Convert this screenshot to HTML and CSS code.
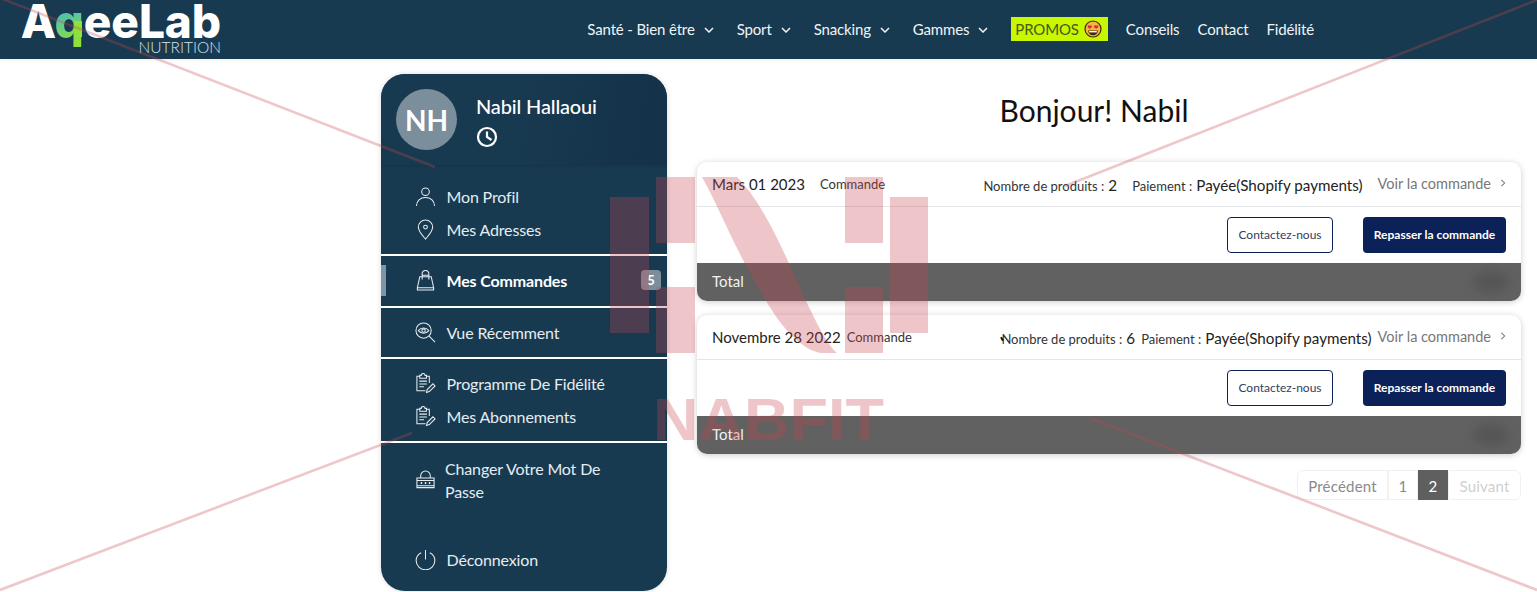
FILE: index.html
```html
<!DOCTYPE html>
<html lang="fr">
<head>
  <meta charset="UTF-8" />
  <title>Mes Commandes</title>
  <meta name="viewport" content="width=device-width, initial-scale=1.0"/>
  <link rel="stylesheet" href="styles.css">
</head>
<body>

  <!-- Top navigation -->
  <header class="navbar">
    <a class="logo" href="#">
      <span class="logo-word">A<span class="logo-q">q</span>eeLab</span>
      <span class="logo-sub">NUTRITION</span>
    </a>
    <nav class="nav-links">
      <a href="#">Santé - Bien être<svg class="chev" viewBox="0 0 10 6"><path d="M1 1l4 4 4-4"/></svg></a>
      <a href="#">Sport<svg class="chev" viewBox="0 0 10 6"><path d="M1 1l4 4 4-4"/></svg></a>
      <a href="#">Snacking<svg class="chev" viewBox="0 0 10 6"><path d="M1 1l4 4 4-4"/></svg></a>
      <a href="#">Gammes<svg class="chev" viewBox="0 0 10 6"><path d="M1 1l4 4 4-4"/></svg></a>
      <a class="promo" href="#">PROMOS<svg class="emoji" viewBox="0 0 18 18">
          <circle cx="9" cy="9" r="8" fill="#f5b642" stroke="#3b2a10" stroke-width="1.2"/>
          <path d="M3.6 6.2c.6-1.4 2-1 2.2-.3.3-.7 1.7-1 2.1.3.2 1-1.3 2-2.1 2.6-.9-.6-2.5-1.5-2.2-2.6zM10 6.2c.5-1.3 1.9-1 2.1-.3.3-.7 1.7-1 2.2.3.3 1.1-1.3 2-2.2 2.6-.8-.6-2.4-1.6-2.1-2.6z" fill="#e3243b"/>
          <path d="M4.2 10.4h9.6c0 3-2.1 4.8-4.8 4.8s-4.8-1.8-4.8-4.8z" fill="#3b2a10"/>
          <path d="M5.2 11h7.6v1.4H5.2z" fill="#fff"/>
        </svg></a>
      <a href="#">Conseils</a>
      <a href="#">Contact</a>
      <a href="#">Fidélité</a>
    </nav>
  </header>

  <main class="page">

    <!-- Account sidebar -->
    <aside class="sidebar">
      <div class="profile">
        <div class="avatar">NH</div>
        <div>
          <div class="profile-name">Nabil Hallaoui</div>
          <svg class="clock" viewBox="0 0 22 22"><circle cx="11" cy="11" r="9"/><path d="M11 5.5V11l4.5 3"/></svg>
        </div>
      </div>

      <div class="menu-group">
        <a class="menu-item" href="#">
          <svg class="icon" viewBox="0 0 22 22"><circle cx="11" cy="6" r="4"/><path d="M1.5 21c0-5.5 4-9 9.5-9s9.5 3.500 9.500 9"/></svg>
          Mon Profil
        </a>
        <a class="menu-item" href="#">
          <svg class="icon" viewBox="0 0 22 22"><path d="M11 21C7 16.500 3.500 13 3.500 8.500a7.500 7.500 0 0 1 15 0C18.500 13 15 16.500 11 21z"/><circle cx="11" cy="8.500" r="2"/></svg>
          Mes Adresses
        </a>
      </div>

      <div class="menu-group menu-group-single">
        <span class="active-bar"></span>
        <a class="menu-item menu-item-active" href="#">
          <svg class="icon" viewBox="0 0 22 22"><path d="M5 7h12l2.500 11.500h-17zM2.500 18.500v2.500h17v-2.500"/><path d="M7.500 10V4a3.500 3.500 0 0 1 7 0v6M7.500 5.500h7"/></svg>
          Mes Commandes
        </a>
        <span class="badge">5</span>
      </div>

      <div class="menu-group menu-group-single">
        <a class="menu-item" href="#">
          <svg class="icon" viewBox="0 0 22 22"><circle cx="9" cy="9" r="8"/><path d="M14.800 14.800L21 21M3.500 9c2.800-3.600 8.200-3.600 11 0-2.800 3.600-8.200 3.600-11 0z"/><circle cx="9" cy="9" r="1.800"/></svg>
          Vue Récemment
        </a>
      </div>

      <div class="menu-group">
        <a class="menu-item" href="#">
          <svg class="icon" viewBox="0 0 22 22"><path d="M11 18.500H2V3.500h3M12 3.500h3v7M5 2.500h1.500a2 2 0 0 1 4 0H12v3H5zM4.500 8.500h8M4.500 11.500h8M4.500 14.500h5"/><path d="M12 20.500l.8-3.200 6-6 2.200 2.200-6 6z"/></svg>
          Programme De Fidélité
        </a>
        <a class="menu-item" href="#">
          <svg class="icon" viewBox="0 0 22 22"><path d="M11 18.500H2V3.500h3M12 3.500h3v7M5 2.500h1.500a2 2 0 0 1 4 0H12v3H5zM4.500 8.500h8M4.500 11.500h8M4.500 14.500h5"/><path d="M12 20.500l.8-3.200 6-6 2.200 2.200-6 6z"/></svg>
          Mes Abonnements
        </a>
      </div>

      <div class="menu-group menu-group-last">
        <a class="menu-item menu-item-wrap" href="#">
          <svg class="icon" viewBox="0 0 22 22"><path d="M6 9.500V7a5 5 0 0 1 10 0v2.500M2 9.500h18v10H2zM2 12h18M2 17.500h18"/><path class="dots" d="M6 14.700h1.500M10.300 14.700h1.500M14.500 14.700H16"/></svg>
          <span>Changer Votre Mot De Passe</span>
        </a>
        <a class="menu-item menu-item-logout" href="#">
          <svg class="icon" viewBox="0 0 22 22"><path d="M11 1v10M6.500 4C3.400 5.600 1.200 8.600 1.200 12a9.800 9.800 0 0 0 19.600 0c0-3.400-2.200-6.400-5.300-8"/></svg>
          Déconnexion
        </a>
      </div>
    </aside>

    <!-- Orders -->
    <section class="content">
      <h1>Bonjour! Nabil</h1>

      <article class="order">
        <div class="order-head">
          <div class="order-date"><span class="date">Mars 01 2023</span><span class="small">Commande</span></div>
          <div class="order-meta">
            <span class="count"><span class="small">Nombre de produits :</span> <span class="val">2</span></span>
            <span class="pay"><span class="small">Paiement :</span> <span class="val">Payée(Shopify payments)</span></span>
            <a class="see" href="#">Voir la commande<svg class="chev-right" viewBox="0 0 6 10"><path d="M1 1l4 4-4 4"/></svg></a>
          </div>
        </div>
        <div class="order-actions">
          <a class="btn btn-outline" href="#">Contactez-nous</a>
          <a class="btn btn-dark" href="#">Repasser la commande</a>
        </div>
        <div class="order-total">Total</div>
      </article>

      <article class="order order-tight">
        <div class="order-head">
          <div class="order-date"><span class="date">Novembre 28 2022</span><span class="small">Commande</span></div>
          <div class="order-meta">
            <span class="count"><span class="tick"></span><span class="small">Nombre de produits :</span> <span class="val">6</span></span>
            <span class="pay"><span class="small">Paiement :</span> <span class="val">Payée(Shopify payments)</span></span>
            <a class="see" href="#">Voir la commande<svg class="chev-right" viewBox="0 0 6 10"><path d="M1 1l4 4-4 4"/></svg></a>
          </div>
        </div>
        <div class="order-actions">
          <a class="btn btn-outline" href="#">Contactez-nous</a>
          <a class="btn btn-dark" href="#">Repasser la commande</a>
        </div>
        <div class="order-total">Total</div>
      </article>

      <div class="pagination">
        <a class="page-prev" href="#">Précédent</a>
        <a class="page-num" href="#">1</a>
        <a class="page-num page-current" href="#">2</a>
        <a class="page-next" href="#">Suivant</a>
      </div>
    </section>
  </main>

  <!-- Watermark laid over the whole page -->
  <svg class="watermark" viewBox="0 0 1537 592" width="1537" height="592">
    <g class="wm-lines">
      <path d="M0 -2L435 167"/>
      <path d="M0 590L412 433"/>
      <path d="M1537 0L1065 186"/>
      <path d="M1090 418L1537 590"/>
    </g>
    <g class="wm-mark">
      <rect x="610" y="197" width="39" height="136"/>
      <rect x="656" y="177" width="39" height="66"/>
      <rect x="656" y="287" width="39" height="66"/>
      <rect x="845" y="177" width="38" height="66"/>
      <rect x="845" y="287" width="38" height="66"/>
      <rect x="890" y="197" width="38" height="136"/>
      <path d="M702 177L737 177C765 205 785 255 807 303C820 330 828 345 837 353L820 353C790 345 770 310 743 260C725 225 715 200 702 177Z"/>
      <text x="653" y="440" textLength="231" lengthAdjust="spacingAndGlyphs">NABFIT</text>
    </g>
  </svg>

</body>
</html>
```

FILE: styles.css
```css
body, html {
  margin: 0;
  padding: 0;
  font-family: Lato, Arial, sans-serif;
  background: white;
  color: #222;
  overflow: hidden;
}

body {
  position: relative;
  height: 592px;
}

a {
  text-decoration: none;
  color: inherit;
}

/* Navbar */
.navbar {
  display: flex;
  justify-content: space-between;
  align-items: center;
  height: 59px;
  padding: 0 223px 0 20px;
  background-color: #183a50;
  box-shadow: 0 1px 3px rgba(0, 0, 0, 0.08);
}

.logo {
  display: flex;
  flex-direction: column;
  align-items: flex-end;
  width: 201px;
  height: 59px;
  color: white;
}

.logo-word {
  font-family: Inter, Arial, sans-serif;
  font-weight: 800;
  font-size: 46px;
  line-height: 42px;
  letter-spacing: -0.1px;
  white-space: nowrap;
}

.logo-q {
  position: relative;
  background: linear-gradient(160deg, #3db6d3 20%, #8fe03c 85%);
  -webkit-background-clip: text;
  background-clip: text;
  color: transparent;
}

.logo-q::after {
  content: "";
  position: absolute;
  right: 2px;
  top: 28px;
  width: 8px;
  height: 16px;
  background-color: #8fe03c;
}

.logo-sub {
  font-weight: 300;
  font-size: 15.5px;
  line-height: 12px;
  margin-top: -1px;
  color: #d9e4ea;
}

.nav-links {
  display: flex;
  align-items: center;
  gap: 18px;
  padding-bottom: 1px;
  font-size: 15px;
  letter-spacing: -0.15px;
  color: #f1f4f6;
}

.nav-links a {
  display: flex;
  align-items: center;
  white-space: nowrap;
}

.chev {
  width: 10px;
  height: 6px;
  margin: 2px 5px 0 9px;
  fill: none;
  stroke: #f1f4f6;
  stroke-width: 1.5;
}

.nav-links a.promo {
  padding: 0 6px 0 4px;
  height: 24px;
  background-color: #c8f700;
  color: #47591d;
}

.emoji {
  width: 18px;
  height: 18px;
  margin-left: 5px;
}

/* Page */
.page {
  display: flex;
  gap: 30px;
  padding: 15px 16px 0 381px;
}

/* Sidebar */
.sidebar {
  flex: 0 0 286px;
  height: 517px;
  box-sizing: border-box;
  border-radius: 24px;
  background-color: #183a50;
  color: #e6ecf0;
  font-size: 16px;
  letter-spacing: -0.15px;
  box-shadow: 0 0 5px rgba(0, 0, 0, 0.15);
  overflow: hidden;
}

.profile {
  display: flex;
  gap: 19px;
  height: 91px;
  box-sizing: border-box;
  padding: 15px 15px 0;
  background: linear-gradient(100deg, #183a50 45%, #14324a 95%);
  box-shadow: 0 1px 4px rgba(0, 0, 0, 0.12);
}

.avatar {
  display: flex;
  align-items: center;
  justify-content: center;
  width: 61px;
  height: 61px;
  border-radius: 50%;
  background-color: #7b8e9c;
  color: white;
  font-size: 28px;
  font-weight: 700;
}

.profile-name {
  margin-top: 5px;
  font-size: 20px;
  font-weight: 500;
  line-height: 24px;
  color: white;
}

.clock {
  display: block;
  width: 22px;
  height: 22px;
  margin-top: 8px;
  fill: none;
  stroke: white;
  stroke-width: 2.2;
}

.menu-group {
  position: relative;
  padding: 9px 0 7px;
  border-bottom: 2px solid white;
}

.profile + .menu-group {
  padding-top: 16px;
}

.menu-group-single {
  padding: 9px 0 8px;
}

.menu-group-single + .menu-group-single {
  padding-bottom: 7px;
}

.menu-group-last {
  padding: 14px 0 0;
  border-bottom: 0;
}

.menu-item {
  display: flex;
  align-items: center;
  gap: 10.5px;
  height: 31px;
  padding: 0 0 2px 34px;
}

.menu-item-active {
  font-weight: 700;
  color: white;
}

.menu-item-wrap {
  height: 45px;
  line-height: 23px;
  gap: 9px;
  padding: 0 50px 1px 34px;
}

.menu-item-logout {
  margin-top: 41px;
}

.icon {
  flex: 0 0 21px;
  width: 21px;
  height: 21px;
  fill: none;
  stroke: #e6ecf0;
  stroke-width: 1.1;
}

.icon .dots {
  stroke-width: 2;
}

.active-bar {
  position: absolute;
  left: 0;
  top: 9px;
  width: 5px;
  height: 31px;
  background-color: #7f95a5;
}

.badge {
  position: absolute;
  right: 6px;
  top: 14px;
  width: 20px;
  height: 20px;
  border-radius: 4px;
  background-color: #7b8e9c;
  color: white;
  font-size: 13px;
  font-weight: 700;
  line-height: 20px;
  text-align: center;
}

/* Orders */
.content {
  flex: 1;
  min-width: 0;
}

h1 {
  margin: 0;
  height: 88px;
  padding-right: 30px;
  font-size: 30px;
  font-weight: 400;
  line-height: 72px;
  text-align: center;
  color: #111;
}

.order {
  --gap: 15px;
  margin-bottom: 14px;
  border-radius: 10px;
  background-color: white;
  box-shadow: 0 1px 6px rgba(0, 0, 0, 0.2);
}

.order-tight {
  --gap: 6px;
}

.order-head {
  display: flex;
  justify-content: space-between;
  align-items: center;
  height: 44px;
  padding: 0 15px;
  border-bottom: 1px solid #e3e5e7;
}

.order-date,
.order-meta {
  display: flex;
  align-items: center;
  gap: var(--gap);
  white-space: nowrap;
}

.date {
  font-size: 15px;
  color: #222;
}

.val {
  font-size: 15.2px;
  color: #222;
}

.small {
  font-size: 13px;
  color: #333;
}

.count,
.pay {
  white-space: pre;
}

.tick {
  display: inline-block;
  width: 2px;
  height: 4px;
  margin-right: -2px;
  background-color: #111;
  vertical-align: 3px;
  transform: rotate(-30deg);
}

.see {
  display: flex;
  align-items: center;
  padding-bottom: 2px;
  color: #777;
  font-size: 14.5px;
  white-space: nowrap;
}

.chev-right {
  width: 6px;
  height: 8px;
  margin-left: 9px;
  fill: none;
  stroke: #777;
  stroke-width: 1.3;
}

.order-actions {
  display: flex;
  justify-content: flex-end;
  align-items: center;
  gap: 30px;
  height: 56px;
  padding-right: 15px;
}

.btn {
  display: flex;
  align-items: center;
  justify-content: center;
  box-sizing: border-box;
  height: 36px;
  padding-bottom: 2px;
  border-radius: 4px;
  font-size: 12px;
}

.btn-outline {
  width: 106px;
  border: 1px solid #0c2157;
  color: #33405e;
}

.btn-dark {
  width: 143px;
  background-color: #0c2157;
  color: white;
  font-weight: 700;
}

.order-total {
  position: relative;
  height: 38px;
  box-sizing: border-box;
  padding: 0 15px;
  border-radius: 0 0 10px 10px;
  background-color: #616161;
  color: #f1f1f1;
  font-size: 15px;
  line-height: 36px;
}

.order-total::after {
  content: "";
  position: absolute;
  right: 12px;
  top: 8px;
  width: 36px;
  height: 22px;
  border-radius: 50%;
  background-color: #565656;
  filter: blur(5px);
}

/* Pagination */
.pagination {
  display: flex;
  justify-content: flex-end;
  height: 30px;
  margin-top: 16px;
  font-size: 15px;
  line-height: 30px;
  text-align: center;
}

.pagination a {
  box-sizing: border-box;
  border: 1px solid #f1f1f1;
  letter-spacing: 0.2px;
}

.page-prev {
  width: 91px;
  border-radius: 6px 0 0 6px;
  color: #8a8a8a;
}

.page-num {
  width: 30px;
  color: #8a8a8a;
}

.pagination .page-current {
  border-color: #5f5f5f;
  background-color: #5f5f5f;
  color: white;
}

.page-next {
  width: 73px;
  border-radius: 0 6px 6px 0;
  color: #cfcfcf;
}

/* Watermark */
.watermark {
  position: absolute;
  left: 0;
  top: 0;
  pointer-events: none;
}

.wm-lines path {
  fill: none;
  stroke: #c84650;
  stroke-width: 2.6;
  opacity: 0.3;
}

.wm-mark {
  fill: #c84650;
  opacity: 0.3;
}

.wm-mark text {
  font-family: "Liberation Sans", Arial, sans-serif;
  font-size: 60px;
  font-weight: 700;
}
```
